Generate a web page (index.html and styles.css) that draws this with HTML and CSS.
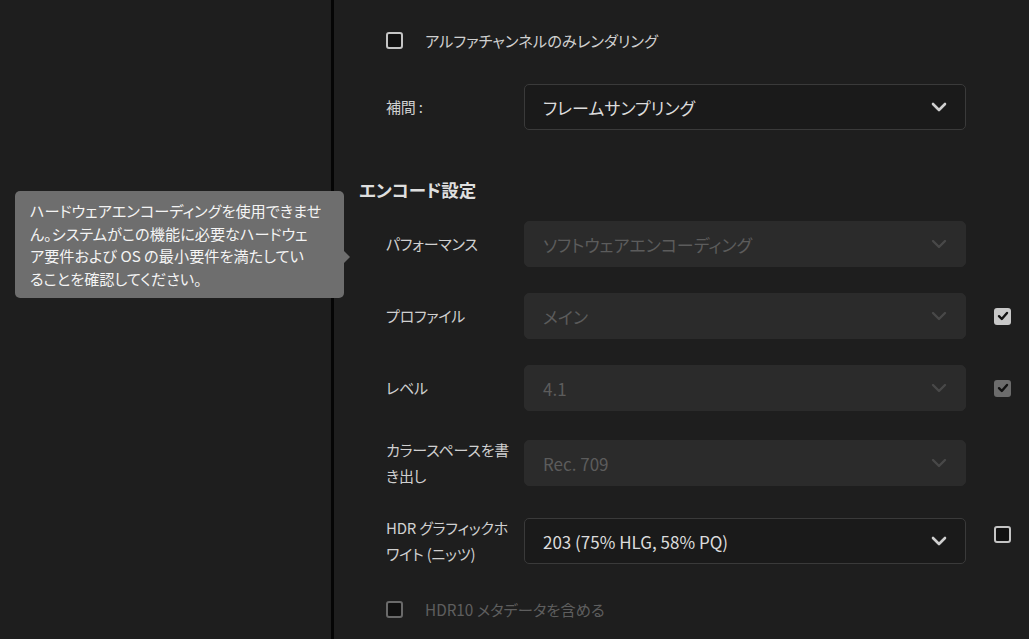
FILE: index.html
```html
<!DOCTYPE html>
<html lang="ja">
<head>
<meta charset="utf-8">
<link rel="stylesheet" href="styles.css">
</head>
<body>
<div class="app">
  <aside class="side"></aside>
  <div class="divider"></div>
  <main class="panel">
    <div class="check-row">
      <span class="cb cb-off"></span>
      <span class="check-label">アルファチャンネルのみレンダリング</span>
    </div>

    <div class="row row-interp">
      <div class="label">補間 :</div>
      <div class="select">
        <span class="select-text">フレームサンプリング</span>
        <svg class="chev" viewBox="0 0 16 10" width="16" height="10"><path d="M2 2 L8 8 L14 2" fill="none" stroke="#cfcfcf" stroke-width="2.6" stroke-linecap="round" stroke-linejoin="round"/></svg>
      </div>
      <div></div>
    </div>

    <h2 class="heading">エンコード設定</h2>

    <div class="rows">
      <div class="row">
        <div class="label">パフォーマンス</div>
        <div class="select disabled">
          <span class="select-text">ソフトウェアエンコーディング</span>
          <svg class="chev" viewBox="0 0 16 10" width="16" height="10"><path d="M2 2 L8 8 L14 2" fill="none" stroke="#484848" stroke-width="2.4" stroke-linecap="round" stroke-linejoin="round"/></svg>
        </div>
        <div></div>
      </div>

      <div class="row">
        <div class="label">プロファイル</div>
        <div class="select disabled">
          <span class="select-text">メイン</span>
          <svg class="chev" viewBox="0 0 16 10" width="16" height="10"><path d="M2 2 L8 8 L14 2" fill="none" stroke="#484848" stroke-width="2.4" stroke-linecap="round" stroke-linejoin="round"/></svg>
        </div>
        <span class="cb cb-on">
          <svg viewBox="0 0 12 12" width="12" height="12"><path d="M2 6.2 L4.8 9 L10 3" fill="none" stroke="#111" stroke-width="2.4" stroke-linecap="round" stroke-linejoin="round"/></svg>
        </span>
      </div>

      <div class="row">
        <div class="label">レベル</div>
        <div class="select disabled">
          <span class="select-text">4.1</span>
          <svg class="chev" viewBox="0 0 16 10" width="16" height="10"><path d="M2 2 L8 8 L14 2" fill="none" stroke="#484848" stroke-width="2.4" stroke-linecap="round" stroke-linejoin="round"/></svg>
        </div>
        <span class="cb cb-on cb-dim">
          <svg viewBox="0 0 12 12" width="12" height="12"><path d="M2 6.2 L4.8 9 L10 3" fill="none" stroke="#111" stroke-width="2.4" stroke-linecap="round" stroke-linejoin="round"/></svg>
        </span>
      </div>

      <div class="row">
        <div class="label">カラースペースを書き出し</div>
        <div class="select disabled">
          <span class="select-text">Rec. 709</span>
          <svg class="chev" viewBox="0 0 16 10" width="16" height="10"><path d="M2 2 L8 8 L14 2" fill="none" stroke="#484848" stroke-width="2.4" stroke-linecap="round" stroke-linejoin="round"/></svg>
        </div>
        <div></div>
      </div>

      <div class="row">
        <div class="label">HDR グラフィックホワイト (ニッツ)</div>
        <div class="select">
          <span class="select-text">203 (75% HLG, 58% PQ)</span>
          <svg class="chev" viewBox="0 0 16 10" width="16" height="10"><path d="M2 2 L8 8 L14 2" fill="none" stroke="#cfcfcf" stroke-width="2.6" stroke-linecap="round" stroke-linejoin="round"/></svg>
        </div>
        <span class="cb cb-off cb-top"></span>
      </div>
    </div>

    <div class="check-row check-bottom">
      <span class="cb cb-off cb-disabled"></span>
      <span class="check-label muted">HDR10 メタデータを含める</span>
    </div>
  </main>

  <div class="tooltip">ハードウェアエンコーディングを使用できませ<br>ん。システムがこの機能に必要なハードウェ<br>ア要件および OS の最小要件を満たしてい<br>ることを確認してください。</div>
</div>
</body>
</html>
```

FILE: styles.css
```css
html, body {
  margin: 0;
  padding: 0;
}
body {
  width: 1029px;
  height: 639px;
  overflow: hidden;
  background: #1e1e1e;
  font-family: "Noto Sans CJK JP", "Noto Sans", sans-serif;
  font-feature-settings: "palt";
  color: #d2d2d2;
}
.app {
  position: relative;
  display: flex;
  height: 639px;
}
.side {
  width: 331px;
  flex: none;
  background: #1e1e1e;
}
.divider {
  width: 3px;
  flex: none;
  background: #050505;
}
.panel {
  flex: 1;
  padding: 28px 0 0 52px;
  box-sizing: border-box;
}
.check-row {
  display: flex;
  align-items: center;
  height: 24px;
  gap: 22px;
}
.check-label {
  font-size: 15.3px;
  color: #d0d0d0;
}
.check-label.muted {
  color: #5e5e5e;
}
.check-bottom {
  margin-top: 30px;
}
.cb {
  width: 17px;
  height: 17px;
  box-sizing: border-box;
  border-radius: 3px;
  display: inline-flex;
  align-items: center;
  justify-content: center;
  flex: none;
}
.cb-off {
  border: 2px solid #c4c4c4;
  background: #111;
}
.cb-disabled {
  border-color: #6a6a6a;
}
.cb-on {
  background: #c8c8c8;
}
.cb-dim {
  background: #6c6c6c;
}
.row {
  display: grid;
  grid-template-columns: 130px 442px 17px;
  column-gap: 8px;
  align-items: center;
}
.row .cb {
  margin-left: 20px;
}
.row .cb-top {
  align-self: start;
  margin-top: 11px;
}
.row-interp {
  margin-top: 32px;
}
.label {
  font-size: 15px;
  letter-spacing: -0.2px;
  line-height: 26px;
  color: #d0d0d0;
}
.select {
  height: 46px;
  box-sizing: border-box;
  border: 1px solid #3a3a3a;
  border-radius: 5px;
  background: #1a1a1a;
  display: flex;
  align-items: center;
  justify-content: space-between;
  padding: 0 18px 0 18px;
}
.select-text {
  font-size: 17px;
  color: #dcdcdc;
}
.select.disabled {
  border-color: #2b2b2b;
  background: #2b2b2b;
}
.select.disabled .select-text {
  color: #5c5c5c;
}
.chev {
  display: block;
}
.heading {
  margin: 46px 0 0 -27px;
  font-size: 17.5px;
  font-weight: 700;
  line-height: 28px;
  color: #dedede;
}
.rows {
  margin-top: 17px;
  display: flex;
  flex-direction: column;
  gap: 26px;
}
.tooltip {
  position: absolute;
  left: 15px;
  top: 191px;
  width: 329px;
  height: 107px;
  box-sizing: border-box;
  padding: 8px 8px 0 15px;
  background: #6e6e6e;
  border-radius: 5px;
  color: #f4f4f4;
  font-size: 15.2px;
  line-height: 22.7px;
  white-space: nowrap;
}
.tooltip::after {
  content: "";
  position: absolute;
  right: -6px;
  top: 60px;
  border-left: 6px solid #6e6e6e;
  border-top: 6px solid transparent;
  border-bottom: 6px solid transparent;
}
```
